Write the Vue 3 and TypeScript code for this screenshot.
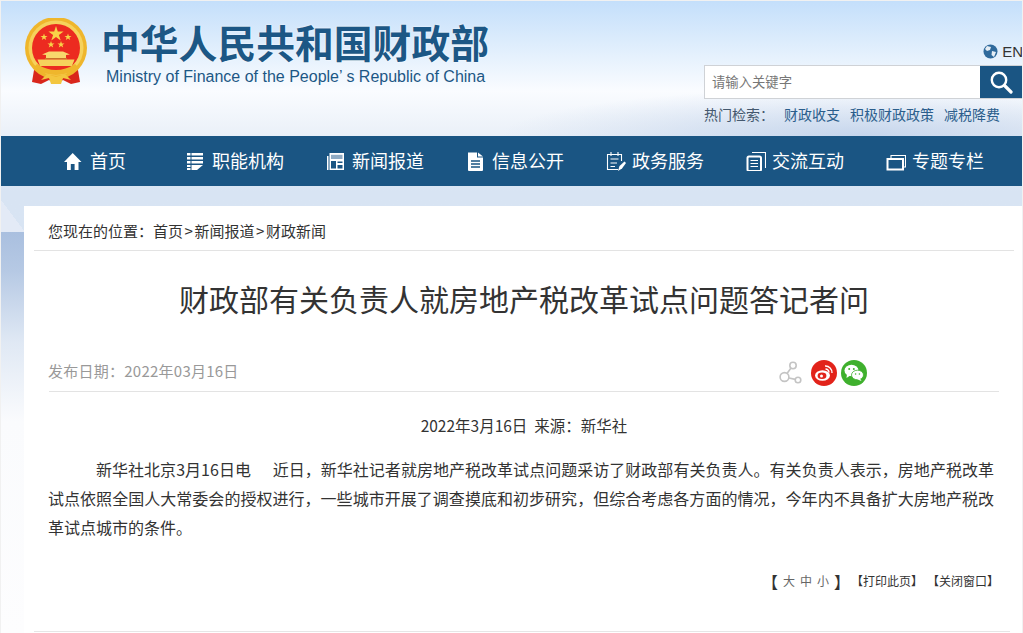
<template>
  <div class="page">
    <header class="head">
      <div class="brand">
        <svg class="emblem" width="62" height="68" viewBox="0 0 62 68">
          <!-- ribbons -->
          <path d="M10 46 L7 64 L16 66 L24 62 L31 66 L38 62 L46 66 L55 64 L52 46Z" fill="#d9261c" />
          <!-- ring -->
          <circle cx="31" cy="30" r="31" fill="#efb62c" />
          <circle cx="31" cy="30" r="27.5" fill="#f6d25c" />
          <circle cx="31" cy="30" r="24" fill="#ec2b20" />
          <!-- gate -->
          <path d="M14 42 H48 V47 A24 24 0 0 1 14 47Z" fill="#ec2b20" />
          <path d="M21 40 V37 L17 36.5 L24 33.5 H38 L45 36.5 L41 37 V40Z" fill="#f8d86c" />
          <rect x="20" y="40" width="22" height="1.4" fill="#c9712a" />
          <path d="M12.5 41.5 H49.5 L47 48 H15Z" fill="#f6d25c" />
          <!-- knot -->
          <path d="M8 50 Q31 64 54 50 L50 46 Q31 58 12 46Z" fill="#efb62c" />
          <path d="M16 62 L22 56 L31 59 L40 56 L46 62 L38 60 L36 66 H26 L24 60Z" fill="#f3c63f" />
          <!-- stars -->
          <polygon points="31,8 32.8,13.5 38.6,13.5 33.9,16.9 35.7,22.4 31,19 26.3,22.4 28.1,16.9 23.4,13.5 29.2,13.5" fill="#f8d448" />
          <polygon points="19,15.5 19.9,18 22.5,18 20.4,19.6 21.2,22.1 19,20.6 16.8,22.1 17.6,19.6 15.5,18 18.1,18" fill="#f8d448" />
          <polygon points="43,15.5 43.9,18 46.5,18 44.4,19.6 45.2,22.1 43,20.6 40.8,22.1 41.6,19.6 39.5,18 42.1,18" fill="#f8d448" />
          <polygon points="26,23 26.9,25.5 29.5,25.5 27.4,27.1 28.2,29.6 26,28.1 23.8,29.6 24.6,27.1 22.5,25.5 25.1,25.5" fill="#f8d448" />
          <polygon points="36,23 36.9,25.5 39.5,25.5 37.4,27.1 38.2,29.6 36,28.1 33.8,29.6 34.6,27.1 32.5,25.5 35.1,25.5" fill="#f8d448" />
        </svg>
        <div class="brand-text">
          <h1>中华人民共和国财政部</h1>
          <p>Ministry of Finance of the People’ s Republic of China</p>
        </div>
      </div>
      <div class="tools">
        <div class="lang">
          <svg width="15" height="15" viewBox="0 0 15 15">
            <circle cx="7.5" cy="7.5" r="7" fill="#2f6a9c" />
            <path d="M4 2 L8 3 L7 6 L4 7 L2 5Z M9 7 L13 8 L11 13 L8.5 11Z" fill="#e6eef5" />
          </svg>
          <span>EN</span>
        </div>
        <div class="search">
          <span class="placeholder">请输入关键字</span>
          <div class="search-btn">
            <svg width="24" height="24" viewBox="0 0 24 24" fill="none" stroke="#fff">
              <circle cx="10" cy="10" r="7.2" stroke-width="2.4" />
              <path d="M15.5 15.5 L22 22" stroke-width="3.2" stroke-linecap="round" />
            </svg>
          </div>
        </div>
        <div class="hot">
          <span class="hot-label">热门检索：</span>
          <a v-for="w in hotWords" :key="w">{{ w }}</a>
        </div>
      </div>
    </header>

    <nav class="nav">
      <a v-for="item in navItems" :key="item.label" class="nav-item">
        <svg width="20" height="20" viewBox="0 0 20 20" v-html="item.icon"></svg>
        <span>{{ item.label }}</span>
      </a>
    </nav>

    <main class="card">
      <div class="crumb">您现在的位置：首页 &gt; 新闻报道 &gt; 财政新闻</div>
      <div class="article">
        <h2>财政部有关负责人就房地产税改革试点问题答记者问</h2>
        <div class="meta">
          <span class="date">发布日期：2022年03月16日</span>
          <div class="share">
            <svg width="24" height="24" viewBox="0 0 24 24" fill="none" stroke="#c4c4c4" stroke-width="1.6">
              <circle cx="15" cy="5.5" r="3.2" />
              <circle cx="6.5" cy="17" r="4.4" />
              <circle cx="20" cy="20" r="2.8" />
              <path d="M13 8 L9 13.5 M11 18 L17.3 19.4" />
            </svg>
            <span class="round weibo">
              <svg width="20" height="18" viewBox="0 0 20 18">
                <ellipse cx="8.5" cy="11.5" rx="7.5" ry="5.2" fill="#fff" />
                <ellipse cx="8" cy="11.8" rx="4.4" ry="3.3" fill="#e2231a" />
                <circle cx="7.5" cy="12" r="1.5" fill="#fff" />
                <path d="M11 2 A6.5 6.5 0 0 1 18 9 M11.5 5 A3.5 3.5 0 0 1 15 8.5" fill="none" stroke="#fff" stroke-width="1.4" />
              </svg>
            </span>
            <span class="round wechat">
              <svg width="20" height="18" viewBox="0 0 20 18">
                <ellipse cx="7.5" cy="6.5" rx="7" ry="5.8" fill="#fff" />
                <path d="M3 10 L2.5 14 L7 11Z" fill="#fff" />
                <ellipse cx="13.5" cy="11" rx="6" ry="4.8" stroke="#3fb02d" stroke-width=".8" fill="#fff" />
                <path d="M16 14.5 L17.5 17 L13.5 15.5Z" fill="#fff" />
                <circle cx="5.2" cy="5" r="1" fill="#3fb02d" />
                <circle cx="9.8" cy="5" r="1" fill="#3fb02d" />
                <circle cx="11.6" cy="10" r=".8" fill="#3fb02d" />
                <circle cx="15.4" cy="10" r=".8" fill="#3fb02d" />
              </svg>
            </span>
          </div>
        </div>
        <div class="source">2022年3月16日&nbsp;&nbsp;来源：新华社</div>
        <p class="body">新华社北京3月16日电&nbsp;&nbsp;&nbsp;&nbsp;&nbsp;&nbsp;近日，新华社记者就房地产税改革试点问题采访了财政部有关负责人。有关负责人表示，房地产税改革试点依照全国人大常委会的授权进行，一些城市开展了调查摸底和初步研究，但综合考虑各方面的情况，今年内不具备扩大房地产税改革试点城市的条件。</p>
        <div class="actions">
          <span class="size">
            <b>【</b>
            <i>大</i>
            <i>中</i>
            <i>小</i>
            <b>】</b>
          </span>
          <span>【打印此页】</span>
          <span>【关闭窗口】</span>
        </div>
      </div>
    </main>
  </div>
</template>

<script setup lang="ts">
interface NavItem {
  label: string
  icon: string
}

const hotWords: string[] = ['财政收支', '积极财政政策', '减税降费']

const navItems: NavItem[] = [
  {
    label: '首页',
    icon: '<path d="M8.7 2 L17.5 11 H14.5 V19 H10.6 V13 H6.8 V19 H3 V11 H0Z" fill="#fff"/>'
  },
  {
    label: '职能机构',
    icon: '<path d="M1 2 H4.5 V4.6 H1Z M5.5 2 H17 V4.6 H5.5Z M1 6 H4.5 V8.6 H1Z M5.5 6 H17 V8.6 H5.5Z M1 10 H4.5 V12.6 H1Z M5.5 10 H17 V12.6 H5.5Z M1 14 H4.5 V16 H1Z M1 17 H4.5 V19 H1Z M5.5 14 H17 L11 19 H5.5Z" fill="#fff"/>'
  },
  {
    label: '新闻报道',
    icon: '<path d="M1 5 H2.5 V19 H1Z M3.5 2 H18 V19 H3.5Z" fill="#fff"/><path d="M5 3.8 H16.5 V8 H5Z" fill="#8fabc4"/><path d="M5 10 H10 V17.5 H5Z M11.5 10.5 H16.5 V12 H11.5Z M11.5 14 H16.5 V17.5 H11.5Z" fill="#1a5583"/>'
  },
  {
    label: '信息公开',
    icon: '<path d="M2 1.5 H11 V6.5 H17 V19 Q17 20 16 20 H3 Q2 20 2 19Z M12 1.5 L17 5.5 H12Z" fill="#fff"/><path d="M5 10 H14 M5 13 H14 M5 16 H14" stroke="#1a5583" stroke-width="1.3"/>'
  },
  {
    label: '政务服务',
    icon: '<path d="M12 18.5 H1.5 V3.5 H15.5 V10 M5 1 V5 M12 1 V5 M4.5 8 H12.5 M4.5 12 H11 M4.5 15.5 H9" fill="none" stroke="#fff" stroke-width="1.1"/><path d="M12 20 L13.5 15 L18.5 10.5 L20 12 L16 17.5Z" fill="#fff"/>'
  },
  {
    label: '交流互动',
    icon: '<path d="M6 1.5 H19.5 V17" fill="none" stroke="#fff" stroke-width="1.1"/><rect x="1.5" y="5.5" width="13.5" height="14.5" rx="1.5" fill="none" stroke="#fff" stroke-width="2"/><path d="M4.5 9.5 H12 M4.5 12.5 H12 M4.5 15.5 H12" stroke="#fff" stroke-width="1.2"/>'
  },
  {
    label: '专题专栏',
    icon: '<path d="M5 7 V4.5 H19.5 V16 H17.5" fill="none" stroke="#fff" stroke-width="1.1"/><rect x="1.5" y="8" width="15.5" height="10.5" fill="none" stroke="#fff" stroke-width="2"/>'
  }
]
</script>

<style>
html,
body {
  margin: 0;
  overflow: hidden;
  background: #fff;
}
</style>

<style scoped>
.page {
  width: 1023px;
  height: 633px;
  box-sizing: border-box;
  overflow: hidden;
  border: 1px solid #f1f1f1;
  border-bottom: 0;
  font-family: 'Noto Sans CJK SC', 'Liberation Sans', sans-serif;
  color: #333;
  background:
    linear-gradient(to bottom left, rgba(225, 233, 245, 0) 50%, #e3eaf6 50%) no-repeat 0 199px / 24px 32px,
    linear-gradient(180deg, #a9bfdf 0, #b6c9e4 40px, #dfe8f4 110px, #fafbfd 190px, #fdfdfe 100%) no-repeat 0 230px / 24px 403px,
    radial-gradient(ellipse 360px 48px at 860px 135px, rgba(186, 205, 232, 0.75) 0, rgba(186, 205, 232, 0) 100%),
    linear-gradient(180deg, #c4dffb 0, #dcecfc 40px, #fafcff 90px, #eaf0f8 135px, #d8e4f3 190px, #d9e5f4 100%);
}

.head {
  height: 135px;
  display: flex;
  justify-content: space-between;
}

.brand {
  display: flex;
  padding: 17px 0 0 24px;
}

.emblem {
  display: block;
}

.brand-text {
  margin-left: 14px;
}

.brand-text h1 {
  margin: 0;
  font-size: 38.8px;
  line-height: 46px;
  font-weight: 700;
  color: #1c5785;
  white-space: nowrap;
  text-shadow: 0 0 2px #fff;
}

.brand-text p {
  margin: 3px 0 0 5px;
  font-family: 'Liberation Sans', sans-serif;
  font-size: 16px;
  line-height: 20px;
  color: #1c5785;
  white-space: nowrap;
}

.tools {
  width: 318px;
  padding-top: 42px;
  box-sizing: border-box;
}

.lang {
  height: 17px;
  margin-right: -1px;
  display: flex;
  align-items: center;
  justify-content: flex-end;
  gap: 4px;
  font-family: 'Liberation Sans', sans-serif;
  font-size: 15px;
  color: #333;
}

.search {
  margin-top: 5px;
  height: 34px;
  display: flex;
  box-sizing: border-box;
  border: 1px solid #cfd2d6;
  border-right: 0;
  background: #fff;
}

.placeholder {
  flex: 1;
  padding-left: 7px;
  font-size: 13.33px;
  line-height: 32px;
  color: #777;
}

.search-btn {
  width: 42px;
  display: flex;
  align-items: center;
  justify-content: center;
  background: #1a5583;
}

.hot {
  margin-top: 6px;
  display: flex;
  font-size: 14px;
  line-height: 18px;
  color: #44586e;
}

.hot-label {
  width: 80px;
}

.hot a {
  margin-right: 10px;
  color: #2b5e8c;
}

.nav {
  height: 50px;
  padding-left: 24px;
  display: grid;
  grid-template-columns: repeat(7, 140px);
  background: #1a5583;
}

.nav-item {
  display: flex;
  align-items: center;
  justify-content: center;
  gap: 6px;
  font-size: 18px;
  color: #fff;
}

.nav-item span {
  margin-top: -2px;
}

.card {
  margin: 20px 0 0 23px;
  height: 427px;
  padding: 0 8px 1px 10px;
  box-sizing: border-box;
  display: flex;
  flex-direction: column;
  background: #fff;
}

.crumb {
  height: 45px;
  padding: 13px 0 0 14px;
  box-sizing: border-box;
  border-bottom: 1px solid #e3e3e3;
  font-size: 15px;
  line-height: 24px;
  color: #333;
  word-spacing: -1.8px;
}

.article {
  flex: 1;
  margin-right: 4px;
  padding: 0 11px 0 15px;
  border-bottom: 1px solid #e6e6e6;
}

.article h2 {
  margin: 25px 0 0;
  font-size: 30px;
  line-height: 44px;
  font-weight: 400;
  text-align: center;
  color: #333;
}

.meta {
  margin-top: 35px;
  height: 37px;
  display: flex;
  justify-content: space-between;
  box-sizing: border-box;
  border-bottom: 1px solid #e3e3e3;
  font-size: 15px;
  line-height: 32px;
  color: #999;
}

.date {
  margin-left: -1px;
  letter-spacing: 0.25px;
}

.share {
  display: flex;
  align-items: flex-start;
  gap: 4px;
  margin-top: 5px;
  padding-right: 132px;
}

.round {
  width: 26px;
  height: 26px;
  border-radius: 50%;
  display: flex;
  align-items: center;
  justify-content: center;
}

.share > svg {
  margin-right: 5px;
}

.weibo {
  background: #e2231a;
}

.wechat {
  background: #3fb02d;
}

.source {
  margin-top: 22px;
  font-size: 15.5px;
  line-height: 22px;
  text-align: center;
}

.body {
  margin: 19px 5px 0 -1px;
  font-size: 16px;
  line-height: 28.8px;
  text-indent: 3em;
  text-align: justify;
}

.actions {
  margin-top: 31px;
  display: flex;
  justify-content: flex-end;
  align-items: center;
  gap: 4px;
  font-size: 12px;
  line-height: 18px;
}

.size {
  display: flex;
  align-items: center;
  gap: 5px;
  margin-right: -3px;
}

.size b {
  font-size: 16px;
  font-weight: 400;
}

.size i {
  font-style: normal;
  color: #666;
}
</style>
